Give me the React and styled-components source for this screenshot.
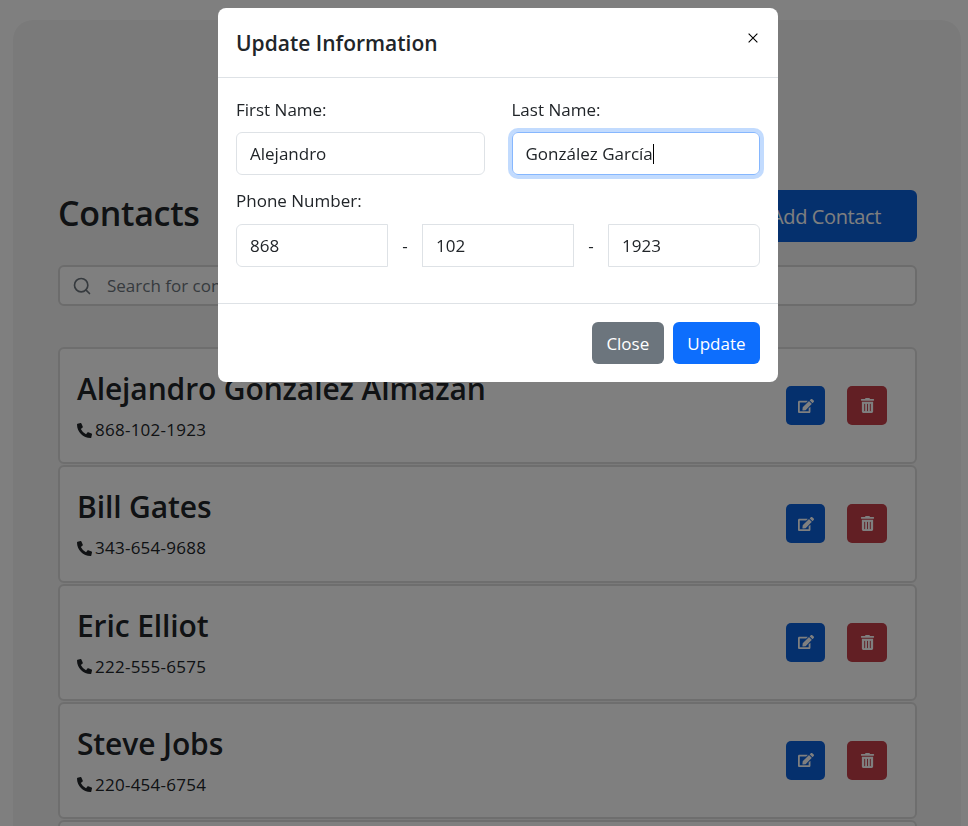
import React from 'react'
import styled, { createGlobalStyle } from 'styled-components'
import { FaEdit, FaTrashAlt, FaPhoneAlt } from 'react-icons/fa'
import { FiSearch } from 'react-icons/fi'

const contacts = [
  { name: 'Alejandro Gonzalez Almazan', phone: '868-102-1923' },
  { name: 'Bill Gates', phone: '343-654-9688' },
  { name: 'Eric Elliot', phone: '222-555-6575' },
  { name: 'Steve Jobs', phone: '220-454-6754' },
]

function App() {
  return (
    <>
      <GlobalStyle />
      <Page>
        <Panel>
          <Header>
            <Title>Contacts</Title>
            <AddButton>Add Contact</AddButton>
          </Header>
          <SearchBox>
            <FiSearch size={20} />
            <SearchInput placeholder="Search for contacts" readOnly />
          </SearchBox>
          <List>
            {contacts.map((c) => (
              <Card key={c.name}>
                <CardText>
                  <Name>{c.name}</Name>
                  <Phone><FaPhoneAlt size={15} />{c.phone}</Phone>
                </CardText>
                <Actions>
                  <EditButton><FaEdit size={16} /></EditButton>
                  <DeleteButton><FaTrashAlt size={15} /></DeleteButton>
                </Actions>
              </Card>
            ))}
            <Card />
          </List>
        </Panel>
      </Page>
      <Backdrop />
      <Modal>
        <ModalHeader>
          <ModalTitle>Update Information</ModalTitle>
          <CloseX aria-label="Close">
            <svg width="10" height="10" viewBox="0 0 16 16"><path d="M1 1l14 14M15 1L1 15" stroke="#000" strokeWidth="1.8" fill="none" /></svg>
          </CloseX>
        </ModalHeader>
        <ModalBody>
          <NameRow>
            <Field>
              <Label>First Name:</Label>
              <Input defaultValue="Alejandro" />
            </Field>
            <Field>
              <Label>Last Name:</Label>
              <FocusedInput>González García<Caret /></FocusedInput>
            </Field>
          </NameRow>
          <PhoneLabel>Phone Number:</PhoneLabel>
          <PhoneRow>
            <PhoneInput side="left" defaultValue="868" />
            <Dash>-</Dash>
            <PhoneInput defaultValue="102" />
            <Dash>-</Dash>
            <PhoneInput side="right" defaultValue="1923" />
          </PhoneRow>
        </ModalBody>
        <ModalFooter>
          <FooterButton color="#6c757d">Close</FooterButton>
          <FooterButton color="#0d6efd">Update</FooterButton>
        </ModalFooter>
      </Modal>
    </>
  )
}

export default App

const GlobalStyle = createGlobalStyle`
  html, body {
    margin: 0;
    height: 100%;
    overflow: hidden;
    background: #fff;
    color: #212529;
    font-family: "Open Sans", "Noto Sans", sans-serif;
  }
  * { box-sizing: border-box; }
`

const Page = styled.div`
  height: 100vh;
  overflow: hidden;
  padding: 20px 7px 0 13px;
`

const Panel = styled.div`
  background: #f5f5f5;
  border-radius: 20px;
  padding: 170px 44px 0 45px;
  min-height: 900px;
`

const Header = styled.div`
  display: flex;
  align-items: center;
  justify-content: space-between;
  height: 52px;
  margin-bottom: 23px;
`

const Title = styled.h1`
  margin: 0 0 6px;
  font-size: 34px;
  font-weight: 600;
  letter-spacing: -0.3px;
`

const AddButton = styled.button`
  height: 52px;
  width: 182px;
  border: none;
  border-radius: 6px;
  background: #0b60da;
  color: #fff;
  font: inherit;
  font-size: 20px;
  letter-spacing: -0.4px;
`

const SearchBox = styled.div`
  display: flex;
  align-items: center;
  gap: 15px;
  height: 41px;
  padding: 0 12px;
  border: 2px solid #d8d8d8;
  border-radius: 6px;
  background: #fff;
  color: #6c757d;
  margin-bottom: 41px;
`

const SearchInput = styled.input`
  flex: 1;
  padding: 0;
  border: none;
  outline: none;
  background: none;
  font: inherit;
  font-size: 17px;
  &::placeholder { color: #6c757d; }
`

const List = styled.div`
  display: flex;
  flex-direction: column;
  gap: 1px;
`

const Card = styled.div`
  display: flex;
  align-items: center;
  justify-content: space-between;
  height: 117.25px;
  flex-shrink: 0;
  padding: 0 28px 0 17px;
  border: 2px solid #dcdcdc;
  border-radius: 6px;
  background: #fff;
`

const CardText = styled.div`
  padding-top: 2px;
`

const Name = styled.div`
  font-size: 30px;
  font-weight: 600;
  line-height: 36px;
  letter-spacing: -0.12px;
  margin-bottom: 11px;
`

const Phone = styled.div`
  display: flex;
  align-items: center;
  gap: 3px;
  font-size: 17px;
  line-height: 24px;
  letter-spacing: 0.25px;
`

const Actions = styled.div`
  display: flex;
  gap: 22px;
`

const EditButton = styled.button`
  display: flex;
  align-items: center;
  justify-content: center;
  width: 39px;
  height: 39px;
  border: none;
  border-radius: 5px;
  background: #0b60da;
  color: #fff;
`

const DeleteButton = styled(EditButton)`
  width: 40px;
  background: #c43e48;
`

const Backdrop = styled.div`
  position: fixed;
  inset: 0;
  background: rgba(0, 0, 0, 0.5);
`

const Modal = styled.div`
  position: fixed;
  top: 8px;
  left: 218px;
  width: 560px;
  height: 374px;
  background: #fff;
  border-radius: 8px;
  display: flex;
  flex-direction: column;
`

const ModalHeader = styled.div`
  display: flex;
  align-items: flex-start;
  justify-content: space-between;
  height: 70px;
  padding: 0 18px;
  border-bottom: 1px solid #dee2e6;
`

const ModalTitle = styled.h5`
  margin: 18px 0 0;
  font-size: 21px;
  font-weight: 600;
  line-height: 34px;
`

const CloseX = styled.button`
  margin: 20px -3px 0 0;
  padding: 5px;
  display: flex;
  border: none;
  background: none;
`

const ModalBody = styled.div`
  flex: 1;
  padding: 20px 18px 0;
`

const NameRow = styled.div`
  display: grid;
  grid-template-columns: 1fr 1fr;
  gap: 27px;
  margin-bottom: 14px;
`

const Field = styled.div`
  display: flex;
  flex-direction: column;
`

const Label = styled.label`
  display: block;
  font-size: 17px;
  line-height: 24px;
  margin-bottom: 10px;
`

const PhoneLabel = styled(Label)`
  margin-bottom: 11px;
`

const Input = styled.input`
  width: 100%;
  height: 43px;
  padding: 0 13px;
  border: 1px solid #dee2e6;
  border-radius: 6px;
  color: #212529;
  font: inherit;
  font-size: 17px;
  outline: none;
`

const FocusedInput = styled.div`
  display: flex;
  align-items: center;
  height: 43px;
  padding: 0 13px;
  border: 1px solid #86b7fe;
  border-radius: 6px;
  box-shadow: 0 0 0 4px rgba(13, 110, 253, 0.25);
  font-size: 17px;
`

const Caret = styled.span`
  width: 1px;
  height: 20px;
  background: #000;
`

const PhoneRow = styled.div`
  display: grid;
  grid-template-columns: 152px 34px 152px 34px 152px;
`

const PhoneInput = styled(Input)`
  border-radius: ${(props) =>
    props.side === 'left' ? '6px 0 0 6px' : props.side === 'right' ? '0 6px 6px 0' : '0'};
`

const Dash = styled.span`
  text-align: center;
  line-height: 43px;
  font-size: 17px;
`

const ModalFooter = styled.div`
  display: flex;
  justify-content: flex-end;
  gap: 9px;
  height: 79px;
  padding: 18px 18px 0;
  border-top: 1px solid #dee2e6;
`

const FooterButton = styled.button`
  height: 42px;
  padding: 0 14.5px;
  border: none;
  border-radius: 6px;
  background: ${(props) => props.color};
  color: #fff;
  font: inherit;
  font-size: 17px;
`
